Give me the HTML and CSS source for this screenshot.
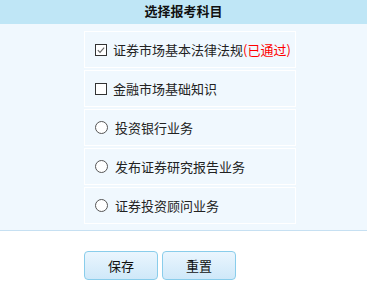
FILE: index.html
```html
<!DOCTYPE html>
<html lang="zh-CN">
<head>
<meta charset="utf-8">
<title>选择报考科目</title>
<link rel="stylesheet" href="styles.css">
</head>
<body>
<div class="header">选择报考科目</div>
<div class="main">
  <div class="list">
    <label class="item">
      <span class="check checked"><svg viewBox="0 0 12 12" width="12" height="12"><polyline points="2.2,6.2 4.8,8.8 9.8,3.2" fill="none" stroke="#666" stroke-width="1.4"/></svg></span>
      <span class="txt">证券市场基本法律法规<span class="passed">(已通过)</span></span>
    </label>
    <label class="item">
      <span class="check"></span>
      <span class="txt">金融市场基础知识</span>
    </label>
    <label class="item">
      <span class="radio"></span>
      <span class="txt">投资银行业务</span>
    </label>
    <label class="item">
      <span class="radio"></span>
      <span class="txt">发布证券研究报告业务</span>
    </label>
    <label class="item">
      <span class="radio"></span>
      <span class="txt">证券投资顾问业务</span>
    </label>
  </div>
</div>
<div class="actions">
  <button class="btn" type="button">保存</button>
  <button class="btn" type="button">重置</button>
</div>
</body>
</html>
```
FILE: styles.css
```css
html, body {
  margin: 0;
  padding: 0;
  background: #ffffff;
  font-family: "Noto Sans CJK SC", "Liberation Sans", sans-serif;
  font-size: 13px;
  color: #222;
}
.header {
  height: 24px;
  line-height: 22px;
  background: #bfe6f6;
  text-align: center;
  font-weight: bold;
  font-size: 13px;
  color: #111;
}
.main {
  background: #f0f8fe;
  padding: 7px 0 6px 84px;
  border-bottom: 1px solid #c6e0f2;
}
.list {
  display: flex;
  flex-direction: column;
  gap: 2px;
  width: 212px;
}
.item {
  box-sizing: border-box;
  height: 37px;
  border: 1px solid #ffffff;
  display: flex;
  align-items: center;
  padding-left: 10px;
}
.check {
  box-sizing: border-box;
  width: 12px;
  height: 12px;
  border: 1px solid #333;
  background: #fff;
  display: flex;
  align-items: center;
  justify-content: center;
  margin-right: 6px;
  flex: none;
}
.check svg {
  display: block;
}
.radio {
  box-sizing: border-box;
  width: 13px;
  height: 13px;
  border: 1.5px solid #555;
  border-radius: 50%;
  background: #fff;
  margin-right: 7px;
  flex: none;
}
.txt {
  line-height: 16px;
  white-space: nowrap;
}
.passed {
  color: #ff0000;
}
.actions {
  display: flex;
  gap: 4px;
  padding: 20px 0 0 84px;
}
.btn {
  box-sizing: border-box;
  width: 74px;
  height: 29px;
  border: 1px solid #89cdeb;
  border-radius: 4px;
  background: linear-gradient(#eaf6fe, #cfe8f9);
  font-family: "Noto Sans CJK SC", "Liberation Sans", sans-serif;
  font-size: 13px;
  color: #111;
  padding: 0;
}
```
